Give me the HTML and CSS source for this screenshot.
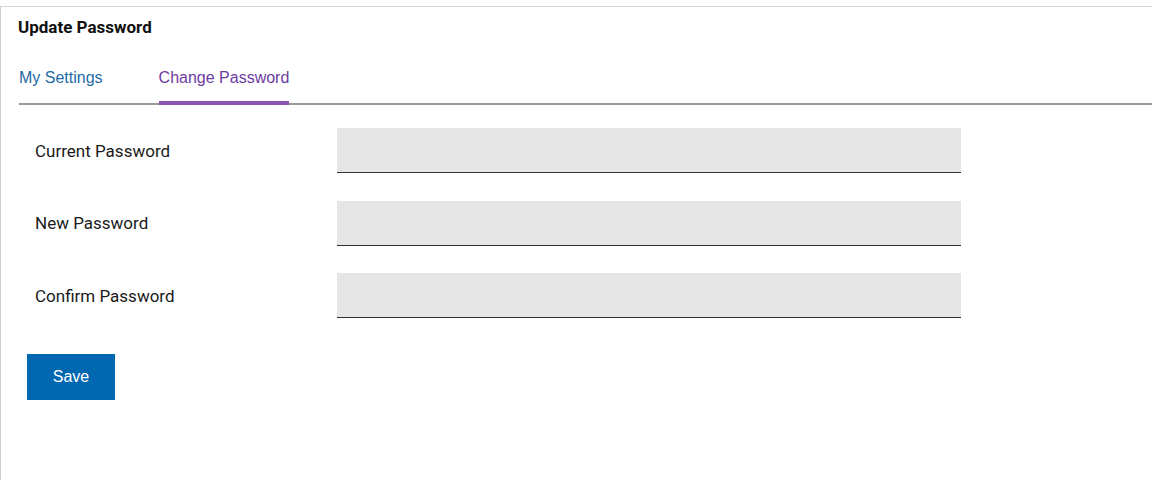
FILE: index.html
```html
<!DOCTYPE html>
<html>
<head>
<meta charset="utf-8">
<link rel="stylesheet" href="styles.css">
</head>
<body>
<div class="card">
  <h1 class="title">Update Password</h1>
  <div class="tabs">
    <a class="tab">My Settings</a>
    <a class="tab active">Change Password</a>
  </div>
  <form class="form">
    <div class="row">
      <label class="label">Current Password</label>
      <input class="input" type="password">
    </div>
    <div class="row">
      <label class="label">New Password</label>
      <input class="input" type="password">
    </div>
    <div class="row">
      <label class="label">Confirm Password</label>
      <input class="input" type="password">
    </div>
    <button class="save" type="button">Save</button>
  </form>
</div>
</body>
</html>
```
FILE: styles.css
```css
html, body {
  margin: 0;
  padding: 0;
  background: #ffffff;
}
body {
  padding-top: 6px;
  font-family: Roboto, "Liberation Sans", sans-serif;
}
.card {
  border-top: 1px solid #d6d6d6;
  border-left: 1px solid #cfcfcf;
  height: 474px;
  box-sizing: border-box;
}
.title {
  margin: 0;
  padding: 11px 0 0 17px;
  font-size: 17px;
  font-weight: 700;
  line-height: 18px;
  color: #111;
}
.tabs {
  margin: 33px 0 0 18px;
  display: flex;
  gap: 56px;
  border-bottom: 2px solid #9a9a9a;
}
.tab {
  font-family: "Liberation Sans", Arial, sans-serif;
  font-size: 16px;
  line-height: 18px;
  padding-bottom: 14px;
  color: #1f6aa5;
  border-bottom: 4px solid transparent;
  margin-bottom: -2px;
}
.tab.active {
  color: #6e3b9e;
  border-bottom-color: #8a55b3;
}
.form {
  padding: 23px 0 0 34px;
}
.row {
  display: flex;
  align-items: center;
  height: 45px;
  margin-bottom: 27.5px;
}
.label {
  width: 302px;
  font-size: 17px;
  color: #1a1a1a;
}
.input {
  width: 624px;
  height: 45px;
  box-sizing: border-box;
  border: none;
  border-bottom: 1px solid #333;
  background: #e5e5e5;
  margin: 0;
  padding: 0 10px;
}
.save {
  margin: 8px 0 0 -8px;
  width: 88px;
  height: 46px;
  border: none;
  background: #0067b1;
  color: #fff;
  font-family: "Liberation Sans", Arial, sans-serif;
  font-size: 16px;
}
```
